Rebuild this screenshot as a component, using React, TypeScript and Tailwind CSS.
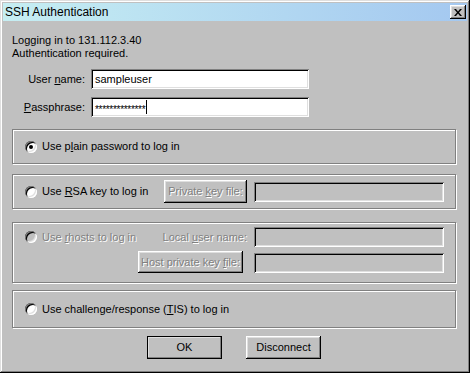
import React from 'react';

const raised =
  'shadow-[inset_-1px_-1px_0_#000,inset_1px_1px_0_#fff,inset_-2px_-2px_0_#808080,inset_2px_2px_0_#dfdfdf]';
const sunken =
  'shadow-[inset_1px_1px_0_#808080,inset_-1px_-1px_0_#fff,inset_2px_2px_0_#000,inset_-2px_-2px_0_#dfdfdf]';
const etched = 'border border-[#808080] shadow-[inset_1px_1px_0_#fff,1px_1px_0_#fff]';
const disabledText = 'text-[#808080] [text-shadow:1px_1px_0_#fff]';

function Radio({ checked = false, disabled = false }: { checked?: boolean; disabled?: boolean }) {
  return (
    <span
      className={`relative inline-block w-[12px] h-[12px] shrink-0 rounded-full ${sunken} ${
        disabled ? 'bg-[#c0c0c0]' : 'bg-white'
      }`}
    >
      {checked && <span className="absolute left-[4px] top-[4px] w-[4px] h-[4px] rounded-full bg-black" />}
    </span>
  );
}

function Field({ disabled = false, className = '', children }: { disabled?: boolean; className?: string; children?: React.ReactNode }) {
  return (
    <div
      className={`h-[20px] flex items-center pl-[4px] ${sunken} ${disabled ? 'bg-[#c0c0c0]' : 'bg-white'} ${className}`}
    >
      {children}
    </div>
  );
}

function Button({
  children,
  disabled = false,
  isDefault = false,
  className = '',
}: {
  children: React.ReactNode;
  disabled?: boolean;
  isDefault?: boolean;
  className?: string;
}) {
  return (
    <div
      className={`flex items-center justify-center bg-[#c0c0c0] ${raised} ${
        isDefault ? 'outline outline-1 outline-black -outline-offset-1' : ''
      } ${disabled ? disabledText : ''} ${className}`}
    >
      <span className="whitespace-nowrap">{children}</span>
    </div>
  );
}

export default function App() {
  return (
    <div className="w-[470px] h-[373px] bg-[#c0c0c0] p-[3px] text-black text-[11px] leading-[13px] font-['Liberation_Sans',Arial,sans-serif] shadow-[inset_-1px_-1px_0_#000,inset_1px_1px_0_#dfdfdf,inset_-2px_-2px_0_#808080,inset_2px_2px_0_#fff]">
      {/* Title bar */}
      <div className="h-[18px] flex items-center justify-between pl-[2px] pr-[1px] bg-gradient-to-r from-[#c6eef2] to-[#a4c8f0]">
        <span className="text-[12px]">SSH Authentication</span>
        <Button className="w-[16px] h-[14px]">
          <svg width="8" height="7" viewBox="0 0 8 7" className="block">
            <path d="M0 0h2l2 2.5L6 0h2L5 3.5 8 7H6L4 4.5 2 7H0l3-3.5z" fill="#000" />
          </svg>
        </Button>
      </div>

      <div className="w-[444px] ml-[9px] pt-[13px]">
        <div>Logging in to 131.112.3.40</div>
        <div>Authentication required.</div>

        <div className="flex items-center mt-[9px]">
          <span className="w-[73px] text-right">
            User <u>n</u>ame:
          </span>
          <Field className="w-[218px] ml-[6px]">sampleuser</Field>
        </div>
        <div className="flex items-center mt-[8px]">
          <span className="w-[73px] text-right">
            <u>P</u>assphrase:
          </span>
          <Field className="w-[218px] ml-[6px]">
            <span className="text-[10px] tracking-[-0.3px] translate-y-[2px]">**************</span>
            <span className="w-px h-[14px] bg-black ml-[1px]" />
          </Field>
        </div>

        {/* Plain password */}
        <div className={`mt-[12px] h-[35px] flex items-center pl-[12px] ${etched}`}>
          <Radio checked />
          <span className="ml-[5px]">
            Use p<u>l</u>ain password to log in
          </span>
        </div>

        {/* RSA key */}
        <div className={`mt-[10px] h-[35px] flex items-center pl-[12px] ${etched}`}>
          <div className="w-[139px] flex items-center">
            <Radio />
            <span className="ml-[5px]">
              Use <u>R</u>SA key to log in
            </span>
          </div>
          <Button disabled className="w-[83px] h-[23px]">
            Private <u>k</u>ey file:
          </Button>
          <Field disabled className="w-[190px] ml-[7px]" />
        </div>

        {/* rhosts */}
        <div className={`mt-[13px] h-[61px] flex flex-col pt-[4px] pr-[11px] ${etched}`}>
          <div className="flex items-center h-[20px] pl-[12px]">
            <Radio disabled />
            <span className={`ml-[5px] flex-1 ${disabledText}`}>
              Use <u>r</u>hosts to log in
            </span>
            <span className={`mr-[7px] ${disabledText}`}>
              Local <u>u</u>ser name:
            </span>
            <Field disabled className="w-[190px]" />
          </div>
          <div className="flex items-end justify-end mt-[4px]">
            <Button disabled className="w-[105px] h-[22px]">
              Host private key <u>f</u>ile:
            </Button>
            <Field disabled className="w-[190px] ml-[11px]" />
          </div>
        </div>

        {/* TIS */}
        <div className={`mt-[7px] h-[38px] flex items-center pl-[12px] ${etched}`}>
          <Radio />
          <span className="ml-[5px]">
            Use challenge/response (<u>T</u>IS) to log in
          </span>
        </div>

        <div className="flex justify-center gap-[24px] mt-[8px]">
          <Button isDefault className="w-[75px] h-[23px]">
            OK
          </Button>
          <Button className="w-[75px] h-[23px]">Disconnect</Button>
        </div>
      </div>
    </div>
  );
}
